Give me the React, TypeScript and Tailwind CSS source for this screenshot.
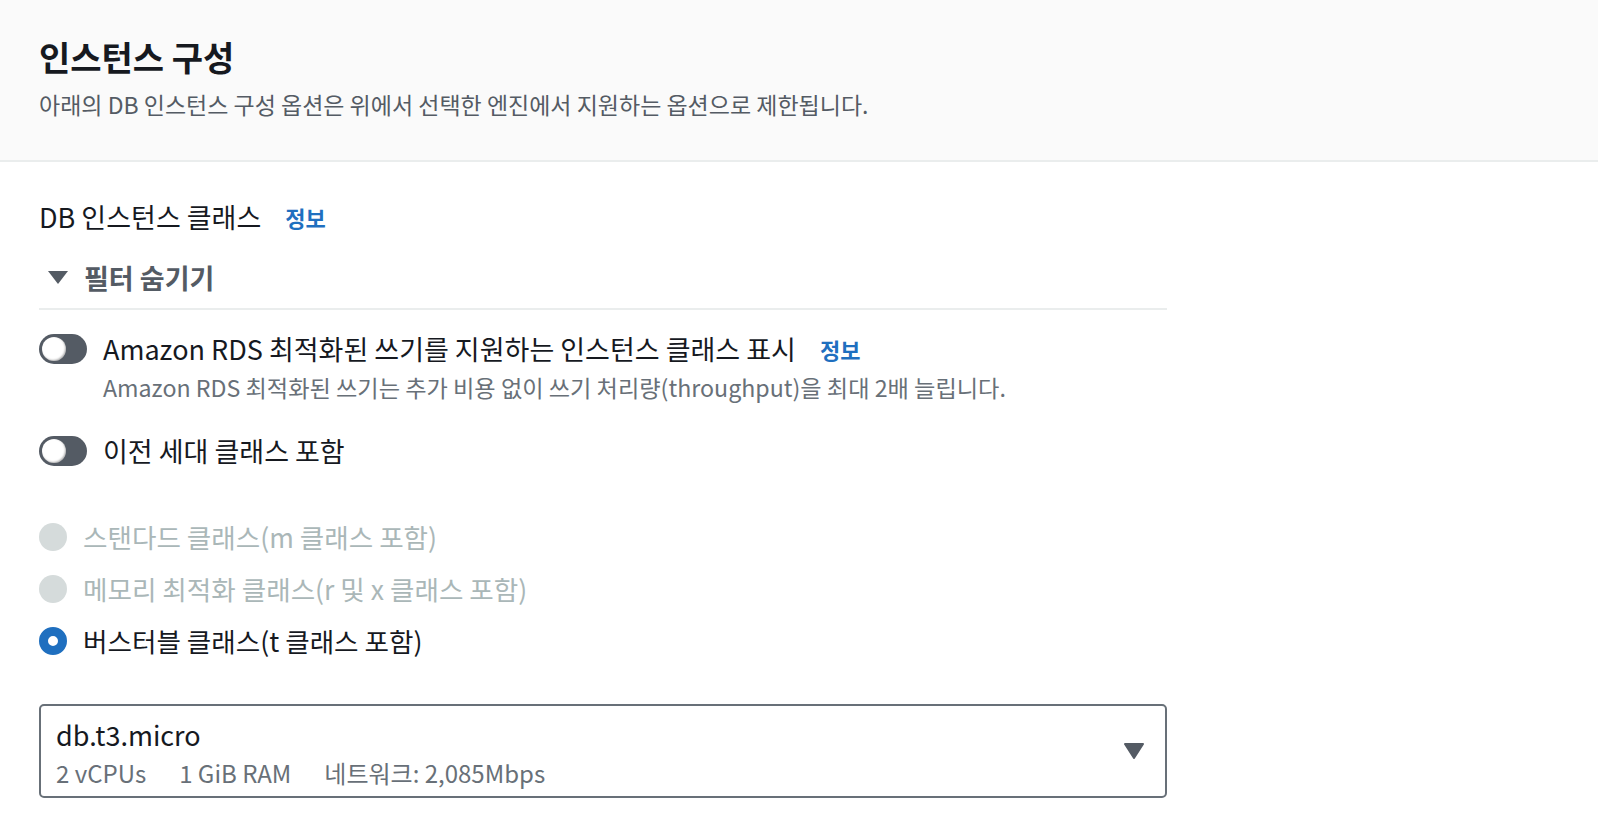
import React, { useState } from 'react';

const font = { fontFamily: '"Noto Sans CJK KR", "Noto Sans", sans-serif' };

const Toggle = ({ on, onClick }: { on: boolean; onClick: () => void }) => (
  <button
    type="button"
    onClick={onClick}
    className={`relative h-[30px] w-[48px] shrink-0 rounded-full ${on ? 'bg-[#0073bb]' : 'bg-[#545b64]'}`}
  >
    <span
      className={`absolute top-[3px] h-[24px] w-[24px] rounded-full bg-white shadow-[inset_-1px_-1px_2px_rgba(0,0,0,0.3)] ${
        on ? 'left-[21px]' : 'left-[3px]'
      }`}
    />
  </button>
);

const Radio = ({ checked, disabled, label }: { checked?: boolean; disabled?: boolean; label: string }) => (
  <div className="flex h-[32px] items-center gap-[16px]">
    {checked ? (
      <span className="h-[28px] w-[28px] shrink-0 rounded-full border-[9px] border-[#1f6fbf] bg-white" />
    ) : (
      <span className={`h-[28px] w-[28px] shrink-0 rounded-full ${disabled ? 'bg-[#d5dbdb]' : 'border-2 border-[#687078]'}`} />
    )}
    <span className={`text-[26.6px] leading-[32px] ${disabled ? 'text-[#aab7b8]' : 'text-[#16191f]'}`}>{label}</span>
  </div>
);

const App = () => {
  const [optimized, setOptimized] = useState(false);
  const [prevGen, setPrevGen] = useState(false);

  return (
    <div className="min-h-screen bg-white" style={font}>
      {/* Header */}
      <div className="h-[162px] border-b-2 border-[#eaeded] bg-[#fafafa] px-[39px] pt-[37px]">
        <h2 className="text-[34px] font-bold leading-[40px] text-[#16191f]">인스턴스 구성</h2>
        <p className="mt-[12px] text-[23px] leading-[30px] text-[#545b64]">
          아래의 DB 인스턴스 구성 옵션은 위에서 선택한 엔진에서 지원하는 옵션으로 제한됩니다.
        </p>
      </div>

      <div className="w-[1167px] pl-[39px] pt-[39px]">
        <div className="flex items-center gap-[24px]">
          <span className="text-[27px] leading-[32px] text-[#16191f]">DB 인스턴스 클래스</span>
          <a className="text-[22px] font-bold leading-[32px] text-[#1f6fbf]">정보</a>
        </div>

        {/* Filter */}
        <div className="mt-[29px] flex items-center gap-[16px] border-b-2 border-[#eaeded] pb-[14px]">
          <svg width="20" height="14" viewBox="0 0 20 14" className="ml-[9px] shrink-0">
            <path d="M0 0 L20 0 L10 13 Z" fill="#545b64" />
          </svg>
          <span className="text-[27px] font-bold leading-[32px] text-[#545b64]">필터 숨기기</span>
        </div>

        <div className="mt-[23px] flex h-[32px] items-center gap-[16px]">
          <Toggle on={optimized} onClick={() => setOptimized(!optimized)} />
          <span className="text-[27px] leading-[32px] text-[#16191f]">
            Amazon RDS 최적화된 쓰기를 지원하는 인스턴스 클래스 표시
          </span>
          <a className="ml-[8px] text-[22px] font-bold leading-[32px] text-[#1f6fbf]">정보</a>
        </div>
        <p className="ml-[64px] mt-[7px] text-[23.2px] leading-[30px] text-[#687078]">
          Amazon RDS 최적화된 쓰기는 추가 비용 없이 쓰기 처리량(throughput)을 최대 2배 늘립니다.
        </p>

        <div className="mt-[33px] flex h-[32px] items-center gap-[16px]">
          <Toggle on={prevGen} onClick={() => setPrevGen(!prevGen)} />
          <span className="text-[27px] leading-[32px] text-[#16191f]">이전 세대 클래스 포함</span>
        </div>

        <div className="mt-[54px] flex flex-col gap-[20px]">
          <Radio disabled label="스탠다드 클래스(m 클래스 포함)" />
          <Radio disabled label="메모리 최적화 클래스(r 및 x 클래스 포함)" />
          <Radio checked label="버스터블 클래스(t 클래스 포함)" />
        </div>

        {/* Select */}
        <div className="mt-[47px] flex items-center justify-between rounded-[5px] border-2 border-[#687078] pl-[15px] pr-[21px] pt-[13px] pb-[8px]">
          <div>
            <div className="text-[27px] leading-[32px] text-[#16191f]">db.t3.micro</div>
            <div className="mt-[7px] flex gap-[33px] text-[24px] leading-[30px] text-[#687078]">
              <span>2 vCPUs</span>
              <span>1 GiB RAM</span>
              <span>네트워크: 2,085Mbps</span>
            </div>
          </div>
          <svg width="20" height="16" viewBox="0 0 20 16" className="mb-[5px] shrink-0">
            <path d="M1 1 L19 1 L10 15 Z" fill="#545b64" stroke="#545b64" strokeWidth="2" strokeLinejoin="round" />
          </svg>
        </div>
      </div>
    </div>
  );
};

export default App;
